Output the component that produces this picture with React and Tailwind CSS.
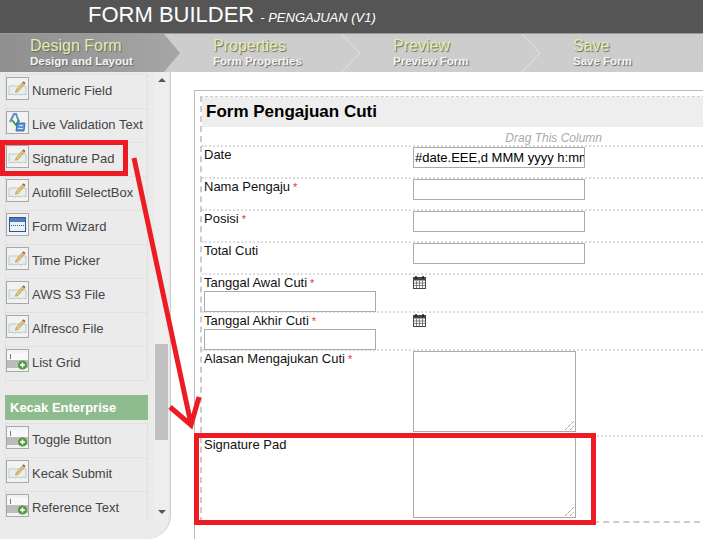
const FONT = "font-['Liberation_Sans',Arial,sans-serif]";

const STEPS = [
  { title: "Design Form", sub: "Design and Layout", active: true },
  { title: "Properties", sub: "Form Properties" },
  { title: "Preview", sub: "Preview Form" },
  { title: "Save", sub: "Save Form" },
];

const TOOLS = [
  { label: "Numeric Field", icon: "pencil" },
  { label: "Live Validation Text", icon: "valid" },
  { label: "Signature Pad", icon: "pencil" },
  { label: "Autofill SelectBox", icon: "pencil" },
  { label: "Form Wizard", icon: "wizard" },
  { label: "Time Picker", icon: "pencil" },
  { label: "AWS S3 File", icon: "pencil" },
  { label: "Alfresco File", icon: "pencil" },
  { label: "List Grid", icon: "plus" },
];

const ENTERPRISE = [
  { label: "Toggle Button", icon: "plus" },
  { label: "Kecak Submit", icon: "pencil" },
  { label: "Reference Text", icon: "plus" },
];

function ToolIcon({ type }) {
  return (
    <span className="mt-[2px] flex h-[23px] w-[23px] shrink-0 items-center justify-center border border-[#a8a8a8] bg-[#f2f2f2]">
      <svg width="21" height="21" viewBox="0 0 21 21">
        {type === "pencil" && (
          <>
            <path d="M2 8h17v9l-2.5-1-2.5 1-3-1-3 1-3-1-3 1z" fill="#e6f0ea" stroke="#c2c8c4" />
            <path d="M9 12l6.5-7.5 2 1.7L11 13.5l-2.5.8z" fill="#eec070" stroke="#a98450" strokeWidth="0.6" />
            <path d="M15.5 4.5l1-1.2 2 1.7-1 1.2z" fill="#8a6a50" />
          </>
        )}
        {type === "valid" && (
          <>
            <path d="M3 10L7 2h2l3 8" fill="none" stroke="#5b8fd0" strokeWidth="2" />
            <path d="M5 8l4 5 3-5" fill="none" stroke="#4a9a4a" strokeWidth="2" />
            <path d="M10 11h8l-1 8H9z" fill="#5b93d6" stroke="#2f5fa5" strokeWidth="0.8" />
            <path d="M12 13.5h4M11 16.5h5" stroke="#d8e6f6" strokeWidth="1" />
          </>
        )}
        {type === "wizard" && (
          <>
            <rect x="2.5" y="3.5" width="16" height="14" fill="#e8f0fa" stroke="#2f5597" />
            <rect x="3" y="4" width="15" height="4" fill="#4f79bd" />
            <path d="M4 11.5h13" stroke="#555" strokeDasharray="1 1" />
          </>
        )}
        {type === "plus" && (
          <>
            <rect x="0" y="3" width="21" height="7" fill="#f9f9f9" />
            <rect x="0" y="10" width="21" height="8" fill="#bcbcbc" />
            <path d="M3.5 4v5" stroke="#777" />
            <circle cx="15.5" cy="15" r="4.5" fill="#4e9a3a" />
            <path d="M13 15h5M15.5 12.5v5" stroke="#fff" strokeWidth="1.6" />
          </>
        )}
      </svg>
    </span>
  );
}

function ToolItem({ tool }) {
  return (
    <div className="flex h-[34px] gap-[3px] border-x border-b border-dotted border-[#d8d8d8] text-[13px] leading-[32px] text-[#444]">
      <ToolIcon type={tool.icon} />
      <span className="whitespace-nowrap">{tool.label}</span>
    </div>
  );
}

function CalendarIcon() {
  return (
    <svg width="13" height="13" viewBox="0 0 13 13">
      <rect x="0.5" y="1.5" width="12" height="11" fill="#fff" stroke="#444" />
      <rect x="0.5" y="1.5" width="12" height="3" fill="#444" />
      <path d="M3 0v3M10 0v3" stroke="#222" strokeWidth="1.5" />
      <path d="M0.5 7h12M0.5 9.5h12M3.5 5v7M6.5 5v7M9.5 5v7" stroke="#666" strokeWidth="0.8" />
    </svg>
  );
}

function Required() {
  return <span className="ml-[3px] text-[11px] text-[#f03030]">*</span>;
}

function TextBox({ value }) {
  return (
    <div className="h-[21px] w-[172px] overflow-hidden whitespace-nowrap border border-[#aaa] bg-white pl-[1px] text-[13px] leading-[19px] text-black">
      {value}
    </div>
  );
}

function Grip() {
  return (
    <svg className="absolute bottom-[1px] right-[1px]" width="9" height="9" viewBox="0 0 9 9">
      <path d="M0 9L9 0M5 9L9 5" stroke="#666" strokeDasharray="1 1" />
    </svg>
  );
}

function TextArea() {
  return <div className="relative h-[81px] w-[163px] border border-[#aaa] bg-white"><Grip /></div>;
}

function Row({ label, required, height, children }) {
  return (
    <div className={`flex border-t-2 border-dotted border-[#ddd] pl-[2px] ${height}`}>
      <div className="w-[209px] shrink-0 text-[13px] leading-[15px] text-[#111]">
        {label}
        {required && <Required />}
      </div>
      <div>{children}</div>
    </div>
  );
}

function DateRow({ label, height }) {
  return (
    <div className={`flex border-t-2 border-dotted border-[#ddd] pl-[2px] ${height}`}>
      <div className="w-[209px] shrink-0 text-[13px] leading-[15px] text-[#111]">
        <div>
          {label}
          <Required />
        </div>
        <TextBox />
      </div>
      <div className="pt-[1px]"><CalendarIcon /></div>
    </div>
  );
}

export default function App() {
  return (
    <div className={`relative h-[539px] w-[703px] overflow-hidden bg-white ${FONT}`}>
      <header className="flex h-[33px] items-baseline bg-[#555] pl-[88px] pt-[1px] text-white">
        <span className="text-[22px] leading-[28px]">FORM BUILDER</span>
        <span className="ml-[6px] text-[13px] italic">- PENGAJUAN (V1)</span>
      </header>

      <nav className="flex h-[39px] border-t border-[#999] bg-[#cdcdcd]">
        {STEPS.map((s) => (
          <div key={s.title} className={`relative w-[180px] shrink-0 pt-[2px] ${s.active ? "pl-[30px]" : "pl-[33px]"}`}>
            {s.active ? (
              <svg className="absolute left-0 top-0" width="180" height="38" viewBox="0 0 180 38">
                <defs>
                  <linearGradient id="stepGrad" x1="0" x2="1" y1="0" y2="0">
                    <stop offset="0" stopColor="#8f8f8f" />
                    <stop offset="1" stopColor="#a6a6a6" />
                  </linearGradient>
                </defs>
                <path d="M0 0H164L180 19L164 38H0z" fill="url(#stepGrad)" />
              </svg>
            ) : (
              <svg className="absolute left-0 top-0" width="180" height="38" viewBox="0 0 180 38">
                <path d="M162 0L180 19L162 38" fill="none" stroke="#e2e2e2" />
              </svg>
            )}
            <div className="relative whitespace-nowrap text-[16px] leading-[19px] text-[#e4eeaa] [text-shadow:1px_1px_1px_#666]">{s.title}</div>
            <div className="relative whitespace-nowrap text-[11.5px] font-bold leading-[13px] text-[#f4f4f4] [text-shadow:1px_1px_1px_#666]">{s.sub}</div>
          </div>
        ))}
      </nav>

      <main className="flex h-[467px]">
        <aside className="flex h-full w-[171px] shrink-0 overflow-hidden rounded-br-[24px] border-r border-[#ccc] bg-[#ebebeb]">
          <div className="h-[449px] w-[149px] shrink-0 overflow-hidden pl-[5px] pr-[1px] pt-[2px]">
            <div className="border-t border-dotted border-[#d8d8d8]">
              {TOOLS.map((t) => <ToolItem key={t.label} tool={t} />)}
            </div>
            <div className="mb-[3px] mt-[14px] flex h-[25px] items-center bg-[#8fbc8f] pl-[5px] text-[13px] font-bold text-white">Kecak Enterprise</div>
            <div className="border-t border-dotted border-[#d8d8d8]">
              {ENTERPRISE.map((t) => <ToolItem key={t.label} tool={t} />)}
            </div>
          </div>
          <div className="ml-[6px] flex h-[449px] w-[13px] shrink-0 flex-col items-center bg-[#eee]">
            <div className="mt-[6px] h-0 w-0 border-x-4 border-b-4 border-x-transparent border-b-[#555]" />
            <div className="mt-[262px] h-[96px] w-[13px] bg-[#c1c1c1]" />
            <div className="mt-[70px] h-0 w-0 border-x-4 border-t-4 border-x-transparent border-t-[#555]" />
          </div>
        </aside>

        <section className="min-w-0 flex-1 pl-[23px] pt-[18px]">
          <div className="h-full border-l border-t border-[#bbb] pl-[5px] pt-[5px]">
            <div className="w-[510px] border-x-2 border-b-2 border-t border-r-0 border-dashed border-[#ccc]">
              <h1 className="flex h-[30px] items-center bg-[#eee] pl-[4px] text-[17px] font-bold text-black">Form Pengajuan Cuti</h1>
              <div className="flex h-[18px] items-end justify-end pr-[108px] text-[12px] italic leading-[14px] text-[#aaa]">Drag This Column</div>
              <Row label="Date" height="h-[32px]"><TextBox value="#date.EEE,d MMM yyyy h:mm" /></Row>
              <Row label="Nama Pengaju" required height="h-[32px]"><TextBox /></Row>
              <Row label="Posisi" required height="h-[32px]"><TextBox /></Row>
              <Row label="Total Cuti" height="h-[32px]"><TextBox /></Row>
              <DateRow label="Tanggal Awal Cuti" height="h-[38px]" />
              <DateRow label="Tanggal Akhir Cuti" height="h-[38px]" />
              <Row label="Alasan Mengajukan Cuti" required height="h-[86px]"><TextArea /></Row>
              <Row label="Signature Pad" height="h-[86px]"><TextArea /></Row>
            </div>
          </div>
        </section>
      </main>

      {/* red annotations drawn over the screenshot */}
      <div className="absolute left-0 top-[140px] h-[36px] w-[128px] border-[5px] border-[#ed1c24]" />
      <div className="absolute left-[194px] top-[433px] h-[92px] w-[402px] border-[5px] border-[#ed1c24]" />
      <svg className="absolute left-0 top-0" width="703" height="539" viewBox="0 0 703 539">
        <path d="M134 158L191 424M170 407L191 425L199 397" fill="none" stroke="#ed1c24" strokeWidth="5" />
      </svg>
    </div>
  );
}
